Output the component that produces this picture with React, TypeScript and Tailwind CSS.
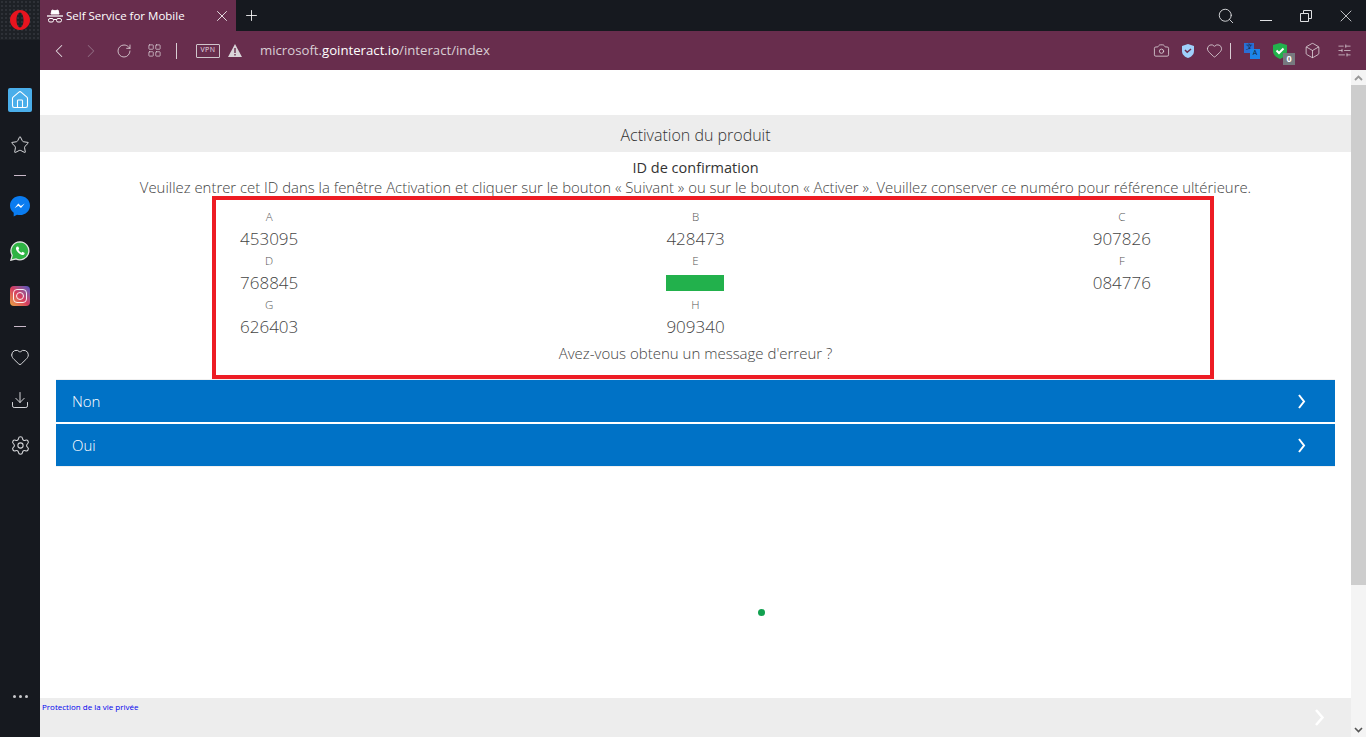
import React from "react";
import { ChevronLeft, ChevronRight, Plus, RotateCw, Search, X, Camera, Heart, Box, SlidersHorizontal, Star, Home, Download, Settings, LayoutGrid } from "lucide-react";

const font = { fontFamily: '"Open Sans", "Noto Sans", sans-serif' };

const Cell = ({ label, value, redacted }: { label: string; value?: string; redacted?: boolean }) => (
  <div className="flex flex-col items-center">
    <div className="h-[20px] text-[11.500px] leading-[20px] font-light text-[#555]">{label}</div>
    <div className="flex h-[24px] items-center text-[17px] font-light leading-[24px] text-[#444]">
      {redacted ? <div className="h-[16px] w-[58px] bg-[#22b14c]" /> : value}
    </div>
  </div>
);

const ActionRow = ({ label }: { label: string }) => (
  <div className="flex h-[42px] items-center justify-between bg-[#0072c6] pl-[16px] pr-[29px] text-white">
    <span className="text-[15px] font-light">{label}</span>
    <svg width="9" height="15" viewBox="0 0 9 15" fill="none"><path d="M2 1l5 6.500-5 6.500" stroke="white" strokeWidth="2" /></svg>
  </div>
);

const SideDivider = () => <div className="h-px w-[12px] bg-[#c9b9c9]" />;

export default function App() {
  return (
    <div className="flex h-[737px] w-[1366px] overflow-hidden bg-[#16191f]" style={font}>
      {/* Sidebar */}
      <aside className="flex h-full w-[40px] shrink-0 flex-col items-center text-[#d5d6d9]">
        <div className="flex h-[40px] w-full items-center justify-center bg-[#1e2126] bg-[radial-gradient(#2e3137_1px,transparent_1px)] bg-[length:4px_4px]">
          <svg width="20" height="20" viewBox="0 0 20 20"><path fillRule="evenodd" d="M10 0c5.500 0 10 4.500 10 10s-4.500 10-10 10S0 15.500 0 10 4.500 0 10 0zm0 2.500C8 2.500 6.500 5.800 6.500 10s1.500 7.500 3.500 7.500 3.500-3.300 3.500-7.500S12 2.500 10 2.500z" fill="#e8141f" /></svg>
        </div>
        <div className="mt-[48px] flex h-[24px] w-[24px] items-center justify-center rounded-[2px] bg-[#4aaeea]">
          <Home size={20} strokeWidth={1.300} className="text-white" />
        </div>
        <Star size={20} strokeWidth={1.200} className="mt-[23px]" />
        <div className="mt-[20px]"><SideDivider /></div>
        <svg width="20" height="21" viewBox="0 0 20 21" className="mt-[20px]">
          <path d="M10 0C4.500 0 0 4.200 0 9.500c0 3 1.400 5.600 3.700 7.300V20.500l3.300-1.800c1 .2 2 .4 3 .4 5.500 0 10-4.200 10-9.600S15.500 0 10 0z" fill="#0a7cf0" />
          <path d="M4.500 12.200l3.800-4.600 2.600 2.300 3.800-2.300-3.700 4.500-2.600-2.300z" fill="white" />
        </svg>
        <svg width="20" height="20" viewBox="0 0 20 20" className="mt-[24px]">
          <path d="M10 .8a9 9 0 0 0-7.800 13.500L.9 19.200l5-1.300A9 9 0 1 0 10 .8z" fill="#2fb344" stroke="#e4e4e4" strokeWidth="1.300" />
          <path d="M7 5.500c-.6.500-1.200 1.300-1 2.600.3 2 3.300 5.300 6 5.900 1.200.200 2.200-.5 2.600-1.300l-.2-1-2-1-.8 1c-1.500-.5-2.700-1.800-3.200-3l.8-.9-.8-2.100z" fill="white" />
        </svg>
        <div className="relative mt-[25px] h-[20px] w-[20px] rounded-[4px] bg-gradient-to-tr from-[#e8a33d] via-[#d63a5e] to-[#4a4fc4]">
          <div className="absolute inset-[3px] rounded-[4px] border-[1.500px] border-white/90" />
          <div className="absolute left-[6px] top-[6px] h-[8px] w-[8px] rounded-full border-[1.500px] border-white/90" />
        </div>
        <div className="mt-[20px]"><SideDivider /></div>
        <Heart size={20} strokeWidth={1.200} className="mt-[20px]" />
        <Download size={20} strokeWidth={1.200} className="mt-[23px]" />
        <Settings size={21} strokeWidth={1.200} className="mt-[25px]" />
        <div className="mt-auto mb-[39px] flex gap-[3px]">
          <div className="h-[3px] w-[3px] rounded-full bg-[#c8c9cc]" />
          <div className="h-[3px] w-[3px] rounded-full bg-[#c8c9cc]" />
          <div className="h-[3px] w-[3px] rounded-full bg-[#c8c9cc]" />
        </div>
      </aside>

      <div className="flex min-w-0 flex-1 flex-col">
        {/* Tab strip */}
        <div className="flex h-[31px] shrink-0 items-center text-white">
          <div className="flex h-full w-[196px] items-center bg-[#682d4d] pl-[7px] pr-[5px]">
            <svg width="16" height="14" viewBox="0 0 16 14" className="mr-[3px] shrink-0" fill="none">
              <path d="M4 5l1-4 3 .8L11 1l1 4z" fill="white" stroke="white" strokeWidth="1" />
              <path d="M0 7h16" stroke="white" strokeWidth="1.300" />
              <rect x="1.500" y="9.500" width="5" height="3.500" rx="1.500" stroke="white" />
              <rect x="9.500" y="9.500" width="5" height="3.500" rx="1.500" stroke="white" />
              <path d="M6.500 10.500h3" stroke="white" />
            </svg>
            <span className="flex-1 truncate text-[11.500px]">Self Service for Mobile</span>
            <X size={18} strokeWidth={1.100} />
          </div>
          <Plus size={17} strokeWidth={1.200} className="ml-[7px]" />
          <div className="ml-auto flex items-center text-[#e0e1e3]">
            <Search size={18} strokeWidth={1.200} className="mr-[25px]" />
            <div className="mr-[28px] mt-[10px] h-px w-[12px] bg-current" />
            <svg width="12" height="12" viewBox="0 0 12 12" fill="none" stroke="currentColor" className="mr-[24px]"><path d="M.5 3.500h8v8h-8zM3.500 3.500v-3h8v8h-3" /></svg>
            <X size={20} strokeWidth={1} className="mr-[10px]" />
          </div>
        </div>

        {/* Address bar */}
        <div className="flex h-[39px] shrink-0 items-center bg-[#682d4d] text-[#e3dce0]">
          <ChevronLeft size={22} strokeWidth={1.100} className="ml-[8px]" />
          <ChevronRight size={22} strokeWidth={1.100} className="ml-[10px] text-[#8f6a80]" />
          <RotateCw size={16} strokeWidth={1.200} className="ml-[14px]" />
          <LayoutGrid size={15} strokeWidth={1.100} className="ml-[15px]" />
          <div className="ml-[14px] h-[16px] w-px bg-[#d9ced4]" />
          <div className="ml-[19px] flex h-[14px] w-[24px] items-center justify-center rounded-[1px] border border-[#cfc5cb] text-[7px] tracking-[0.5px]">VPN</div>
          <svg width="14" height="13" viewBox="0 0 14 13" className="ml-[8px]"><path d="M7 0l7 13H0z" fill="#d9d4d8" /><path d="M6.300 4h1.400v5H6.300zM6.300 10h1.400v1.500H6.300z" fill="#682d4d" /></svg>
          <div className="ml-[18px] text-[13.200px] text-[#d9ced4]">microsoft.<span className="text-white">gointeract.io</span>/interact/index</div>
          <div className="ml-auto flex items-center">
            <Camera size={17} strokeWidth={1.100} />
            <svg width="12" height="14" viewBox="0 0 12 14" className="ml-[12px]"><path d="M6 0l6 2v5c0 3.500-2.500 5.800-6 7-3.500-1.200-6-3.500-6-7V2z" fill="#9fd0fb" /><path d="M3 6l2.200 2.200L9 5" fill="none" stroke="#682d4d" strokeWidth="1.500" /></svg>
            <Heart size={17} strokeWidth={1.100} className="ml-[12px]" />
            <div className="ml-[7px] h-[16px] w-px bg-[#d9ced4]" />
            <div className="relative ml-[13px] h-[16px] w-[16px]">
              <div className="absolute left-0 top-0 flex h-[10px] w-[10px] items-center justify-center bg-[#2a6fd6] text-[7px] text-[#123]">文</div>
              <div className="absolute bottom-0 right-0 flex h-[10px] w-[10px] items-center justify-center bg-[#1d84e8] text-[7px] text-[#123]">A</div>
            </div>
            <div className="relative ml-[13px] h-[16px] w-[14px]">
              <svg width="14" height="16" viewBox="0 0 14 16"><path d="M7 0l7 2v6c0 3.500-3 6.500-7 8-4-1.500-7-4.500-7-8V2z" fill="#22b14c" /><path d="M3.500 7.500l2.500 2.500 4.500-4.500" fill="none" stroke="white" strokeWidth="2" /></svg>
              <div className="absolute left-[10px] top-[10px] flex h-[12px] w-[12px] items-center justify-center bg-[#77797f] text-[9px] font-bold text-white">0</div>
            </div>
            <Box size={17} strokeWidth={1.100} className="ml-[17px]" />
            <SlidersHorizontal size={15} strokeWidth={1.100} className="ml-[16px] mr-[14px]" />
          </div>
        </div>

        {/* Page */}
        <div className="flex min-h-0 flex-1 bg-white">
          <main className="relative flex min-w-0 flex-1 flex-col">
            <div className="h-[45px] shrink-0" />
            <div className="flex h-[37px] shrink-0 items-center justify-center bg-[#ededed] pt-[3px] text-[16px] font-light text-[#333]">Activation du produit</div>
            <div className="mt-[5px] text-center text-[14.500px] leading-[21px] text-[#333]">ID de confirmation</div>
            <p className="text-center text-[14.900px] leading-[19px] font-light text-[#444]">
              Veuillez entrer cet ID dans la fenêtre Activation et cliquer sur le bouton « Suivant » ou sur le bouton « Activer ». Veuillez conserver ce numéro pour référence ultérieure.
            </p>
            <div className="mx-[16px] mt-[10px] grid grid-cols-3">
              <Cell label="A" value="453095" />
              <Cell label="B" value="428473" />
              <Cell label="C" value="907826" />
              <Cell label="D" value="768845" />
              <Cell label="E" redacted />
              <Cell label="F" value="084776" />
              <Cell label="G" value="626403" />
              <Cell label="H" value="909340" />
              <div />
            </div>
            <div className="mt-[4px] text-center text-[15px] leading-[20px] font-light text-[#444]">Avez-vous obtenu un message d'erreur ?</div>
            <div className="mx-[16px] mt-[16px] flex flex-col gap-[2px] border-y border-[#f0f0f0] bg-white">
              <ActionRow label="Non" />
              <ActionRow label="Oui" />
            </div>
            <div className="relative min-h-0 flex-1">
              <div className="absolute left-[718px] top-[142px] h-[7px] w-[7px] rounded-full bg-[#12a150]" />
            </div>
            <div className="flex h-[39px] shrink-0 items-start justify-between bg-[#ededed] pl-[2px] pr-[26px]">
              <a className="mt-[3px] text-[8px] leading-[12px] text-[#0000ee]">Protection de la vie privée</a>
              <svg width="11" height="17" viewBox="0 0 11 17" fill="none" className="mt-[11px]"><path d="M2 1l6.500 7.500L2 16" stroke="white" strokeWidth="2.500" /></svg>
            </div>
            {/* annotation drawn over the page */}
            <div className="absolute left-[172px] top-[126px] h-[183px] w-[1002px] border-[4px] border-[#ed1c24]" />
          </main>

          {/* Scrollbar */}
          <div className="flex w-[15px] shrink-0 flex-col bg-[#f4f4f4]">
            <div className="flex h-[15px] shrink-0 items-center justify-center">
              <svg width="9" height="6" viewBox="0 0 9 6" fill="none"><path d="M1 5l3.500-3.500L8 5" stroke="#999" strokeWidth="1.800" /></svg>
            </div>
            <div className="h-[500px] shrink-0 bg-[#cdcdcd]" />
            <div className="flex-1" />
            <div className="flex h-[15px] shrink-0 items-center justify-center">
              <svg width="9" height="6" viewBox="0 0 9 6" fill="none"><path d="M1 1l3.500 3.500L8 1" stroke="#555" strokeWidth="1.600" /></svg>
            </div>
          </div>
        </div>
      </div>
    </div>
  );
}
